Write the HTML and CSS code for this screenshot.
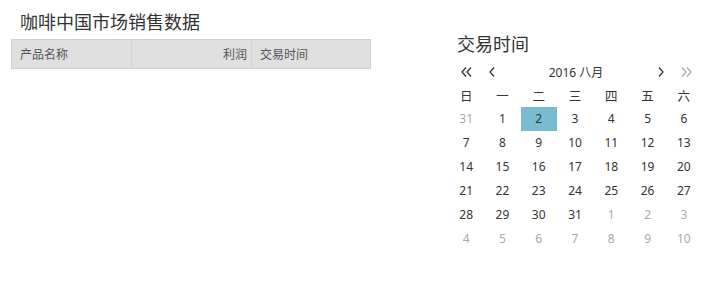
FILE: index.html
```html
<!DOCTYPE html>
<html lang="zh">
<head>
<meta charset="utf-8">
<title>咖啡中国市场销售数据</title>
<link rel="stylesheet" href="styles.css">
</head>
<body>
<div class="page">
  <section class="report">
    <h1 class="title">咖啡中国市场销售数据</h1>
    <div class="table-head">
      <div class="th">产品名称</div>
      <div class="th th-num">利润</div>
      <div class="th">交易时间</div>
    </div>
  </section>
  <section class="picker">
    <h2 class="picker-title">交易时间</h2>
    <div class="nav">
      <span class="nav-btn nav-dbl">
        <svg width="11" height="10" viewBox="0 0 11 10"><path d="M5 0.5 L1 5 L5 9.5 M10 0.5 L6 5 L10 9.5" fill="none" stroke="#333" stroke-width="1.3"/></svg>
      </span>
      <span class="nav-btn nav-one">
        <svg width="6" height="10" viewBox="0 0 6 10"><path d="M5 0.5 L1 5 L5 9.5" fill="none" stroke="#333" stroke-width="1.3"/></svg>
      </span>
      <span class="nav-label">2016 八月</span>
      <span class="nav-btn nav-one-r">
        <svg width="6" height="10" viewBox="0 0 6 10"><path d="M1 0.5 L5 5 L1 9.5" fill="none" stroke="#333" stroke-width="1.3"/></svg>
      </span>
      <span class="nav-btn nav-dbl-r">
        <svg width="11" height="10" viewBox="0 0 11 10"><path d="M1 0.5 L5 5 L1 9.5 M6 0.5 L10 5 L6 9.5" fill="none" stroke="#aaa" stroke-width="1.3"/></svg>
      </span>
    </div>
    <div class="grid weekdays">
      <span>日</span><span>一</span><span>二</span><span>三</span><span>四</span><span>五</span><span>六</span>
    </div>
    <div class="grid days">
      <span class="muted">31</span><span>1</span><span class="active">2</span><span>3</span><span>4</span><span>5</span><span>6</span>
      <span>7</span><span>8</span><span>9</span><span>10</span><span>11</span><span>12</span><span>13</span>
      <span>14</span><span>15</span><span>16</span><span>17</span><span>18</span><span>19</span><span>20</span>
      <span>21</span><span>22</span><span>23</span><span>24</span><span>25</span><span>26</span><span>27</span>
      <span>28</span><span>29</span><span>30</span><span>31</span><span class="muted">1</span><span class="muted">2</span><span class="muted">3</span>
      <span class="muted">4</span><span class="muted">5</span><span class="muted">6</span><span class="muted">7</span><span class="muted">8</span><span class="muted">9</span><span class="muted">10</span>
    </div>
  </section>
</div>
</body>
</html>
```

FILE: styles.css
```css
* { box-sizing: border-box; }
html, body {
  margin: 0;
  padding: 0;
  background: #fff;
}
body {
  font-family: "Noto Sans", "Noto Sans CJK SC", sans-serif;
  color: #333;
}
.page {
  display: flex;
  align-items: flex-start;
}
.report {
  margin-left: 11px;
  width: 360px;
  padding-top: 10px;
}
.title {
  margin: 0 0 5px;
  padding-left: 9px;
  font-size: 18px;
  font-weight: normal;
  line-height: 24px;
  color: #333;
}
.table-head {
  display: grid;
  grid-template-columns: 119px 120px 1fr;
  height: 30px;
  background: #e0e0e0;
  border: 1px solid #cfcfcf;
}
.th {
  display: flex;
  align-items: center;
  padding: 0 8px;
  font-size: 12px;
  color: #555;
  border-left: 1px solid #d2d2d2;
}
.th:first-child { border-left: none; }
.th-num {
  justify-content: flex-end;
  padding-right: 4px;
}
.picker {
  margin-left: 77px;
  width: 254px;
  padding-top: 32px;
}
.picker-title {
  margin: 0 0 4px;
  padding-left: 9px;
  font-size: 18px;
  font-weight: normal;
  line-height: 24px;
  color: #333;
}
.nav {
  display: flex;
  align-items: center;
  height: 24px;
  font-size: 12px;
}
.nav-btn {
  display: flex;
  align-items: center;
  justify-content: center;
}
.nav-dbl { width: 36px; }
.nav-one { width: 16px; }
.nav-label {
  flex: 1;
  text-align: center;
  color: #333;
}
.nav-one-r { width: 18px; }
.nav-dbl-r { width: 32px; }
.grid {
  display: grid;
  grid-template-columns: repeat(7, 1fr);
  font-size: 12px;
  text-align: center;
}
.weekdays span {
  height: 23px;
  line-height: 23px;
  padding-top: 1px;
  font-size: 12.5px;
}
.days span {
  height: 24px;
  line-height: 24px;
  color: #333;
}
.days .muted { color: #aaa; }
.days .active {
  background: #7bbbcf;
  color: #333;
}
```
